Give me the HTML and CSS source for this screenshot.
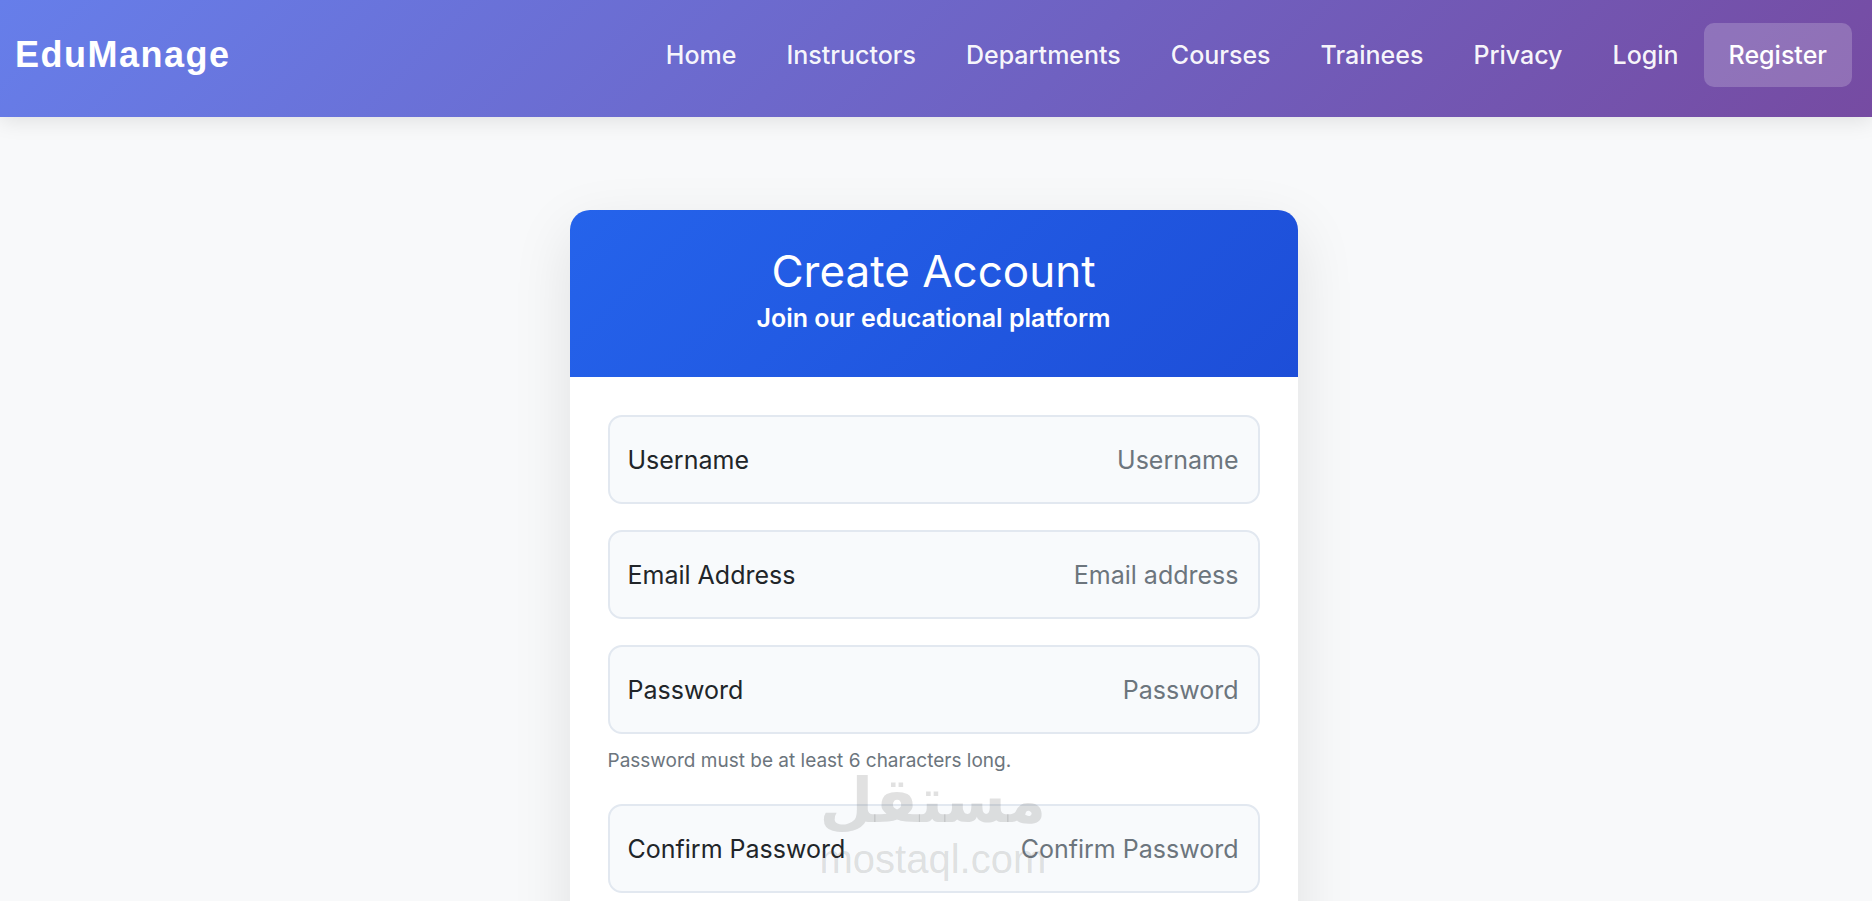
FILE: index.html
```html
<!DOCTYPE html>
<html lang="en">
<head>
  <meta charset="UTF-8">
  <meta name="viewport" content="width=device-width, initial-scale=1.0">
  <title>Register - EduManage</title>
  <link rel="stylesheet" href="styles.css">
</head>
<body>

  <header class="navbar">
    <a class="brand" href="#">EduManage</a>
    <nav class="nav-links">
      <a href="#">Home</a>
      <a href="#">Instructors</a>
      <a href="#">Departments</a>
      <a href="#">Courses</a>
      <a href="#">Trainees</a>
      <a href="#">Privacy</a>
      <a href="#">Login</a>
      <a href="#" class="active">Register</a>
    </nav>
  </header>

  <main class="page">
    <div class="card">
      <div class="card-header">
        <h1>Create Account</h1>
        <p>Join our educational platform</p>
      </div>

      <form class="card-body">
        <div class="field">
          <label for="username">Username</label>
          <input type="text" id="username" placeholder="Username">
        </div>

        <div class="field">
          <label for="email">Email Address</label>
          <input type="email" id="email" placeholder="Email address">
        </div>

        <div class="field">
          <label for="password">Password</label>
          <input type="password" id="password" placeholder="Password">
        </div>
        <small class="help">Password must be at least 6 characters long.</small>

        <div class="field">
          <label for="confirm">Confirm Password</label>
          <input type="password" id="confirm" placeholder="Confirm Password">
        </div>

        <!-- site watermark -->
        <div class="watermark">
          <span class="wm-ar">مستقل</span>
          <span class="wm-en">mostaql.com</span>
        </div>
      </form>
    </div>
  </main>

</body>
</html>
```

FILE: styles.css
```css
body {
  margin: 0;
  padding: 0;
  font-family: Inter, "Noto Sans", sans-serif;
  background-color: #f8f9fa;
  color: #212529;
}

.navbar {
  display: flex;
  align-items: center;
  justify-content: space-between;
  height: 117px;
  box-sizing: border-box;
  padding: 0 20px 8px 15px;
  background: linear-gradient(135deg, #667eea 0%, #764ba2 100%);
  box-shadow: 0 4px 20px rgba(0, 0, 0, 0.1);
}

.brand {
  font-family: "Liberation Sans", Arial, sans-serif;
  font-weight: bold;
  font-size: 36px;
  letter-spacing: 1.5px;
  color: white;
  text-decoration: none;
}

.nav-links {
  display: flex;
  align-items: center;
}

.nav-links a {
  padding: 14px 25px;
  font-size: 25px;
  line-height: 36px;
  font-weight: 500;
  color: rgba(255, 255, 255, 0.95);
  text-decoration: none;
  border-radius: 10px;
}

.nav-links a.active {
  background-color: rgba(255, 255, 255, 0.2);
  color: white;
}

.page {
  display: flex;
  justify-content: center;
  padding: 93px 5px 0 0;
}

.card {
  width: 728px;
  background: white;
  border-radius: 20px;
  overflow: hidden;
  box-shadow: 0 20px 60px rgba(0, 0, 0, 0.1);
}

.card-header {
  padding: 35px 20px 41px;
  text-align: center;
  color: white;
  background: linear-gradient(135deg, #2563eb 0%, #1d4ed8 100%);
}

.card-header h1 {
  margin: 0 0 3px;
  font-size: 44px;
  line-height: 52px;
  font-weight: 400;
}

.card-header p {
  margin: 0;
  font-size: 25px;
  line-height: 36px;
  font-weight: 600;
}

.card-body {
  position: relative;
  display: flex;
  flex-direction: column;
  padding: 38px 38px;
}

.field {
  display: flex;
  align-items: center;
  height: 89px;
  box-sizing: border-box;
  margin-bottom: 26px;
  padding: 0 19px 0 18px;
  background-color: #f8fafc;
  border: 2px solid #e2e8f0;
  border-radius: 14px;
}

.field label {
  flex: none;
  font-size: 25px;
  color: #212529;
}

.field input {
  flex: 1;
  min-width: 0;
  padding: 0;
  border: none;
  outline: none;
  background: transparent;
  text-align: right;
  font-family: Inter, "Noto Sans", sans-serif;
  font-size: 25px;
  color: #212529;
}

.field input::placeholder {
  color: #6c757d;
}

.help {
  margin: -12px 0 30px;
  font-size: 19px;
  line-height: 26px;
  color: #6c757d;
}

.watermark {
  position: absolute;
  left: 250px;
  top: 388px;
  display: flex;
  flex-direction: column;
  align-items: center;
  pointer-events: none;
  color: rgba(90, 90, 90, 0.18);
}

.wm-ar {
  font-family: "DejaVu Sans", sans-serif;
  font-weight: bold;
  font-size: 62px;
  line-height: 72px;
}

.wm-en {
  font-family: "Liberation Sans", Arial, sans-serif;
  font-size: 40px;
  line-height: 44px;
}
```
